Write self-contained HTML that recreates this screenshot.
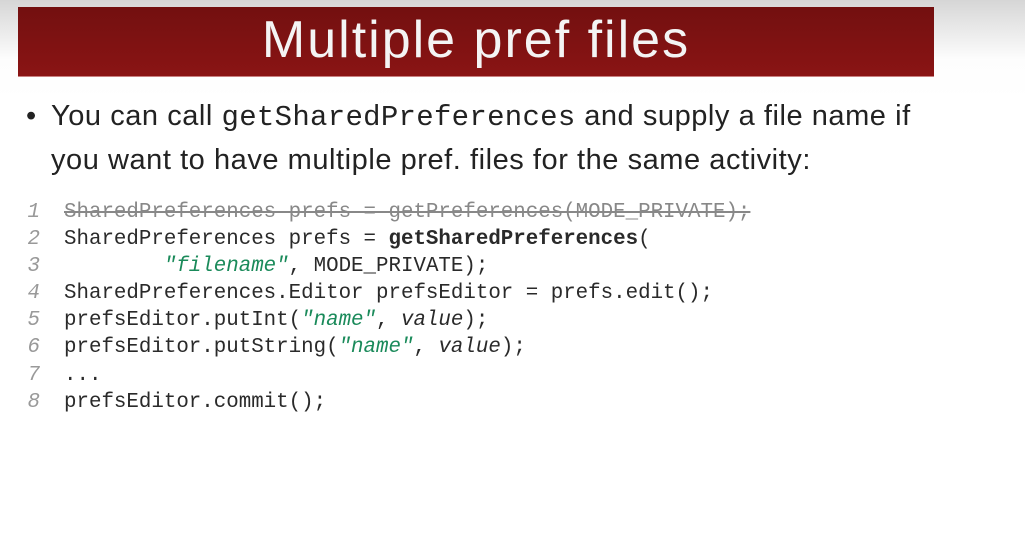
<!DOCTYPE html>
<html><head><style>
body{margin:0;width:1025px;height:538px;overflow:hidden;background:linear-gradient(#d6d6d6 0px,#fdfdfd 60px,#fff 100px);font-family:"Liberation Sans",sans-serif;position:relative}
.hdr{position:absolute;left:18px;top:7px;width:916px;height:69px;background:linear-gradient(#731010,#8a1414);border-bottom:1px solid #c98080}
.hdr div{position:absolute;left:0;right:0;top:3px;text-align:center;color:#f4f4f4;font-size:52px;letter-spacing:2px}
.b{position:absolute;left:26px;top:95px;font-size:29px;color:#222;line-height:42px;width:980px;letter-spacing:0.55px}
.b .dot{position:absolute;left:0;top:0}
.b .t{margin-left:25px}
.b code{font-family:"Liberation Mono",monospace;font-size:29px;letter-spacing:0.3px}
.code{position:absolute;left:0;top:199px;font-family:"Liberation Mono",monospace;font-size:20.8px;color:#2a2a2a;line-height:27.1px;white-space:pre}
.ln{display:inline-block;width:40px;text-align:right;color:#999;font-style:italic;margin-right:24px}
.s{color:#1a8a5a;font-style:italic}
.v{font-style:italic}
.del{text-decoration:line-through;color:#888}
</style></head><body>
<div class="hdr"><div>Multiple pref files</div></div>
<div class="b"><span class="dot">•</span><div class="t">You can call <code>getSharedPreferences</code> and supply a file name if<br>you want to have multiple pref. files for the same activity:</div></div>
<div class="code"><span class="ln">1</span><span class="del">SharedPreferences prefs = getPreferences(MODE_PRIVATE);</span>
<span class="ln">2</span>SharedPreferences prefs = <b>getSharedPreferences</b>(
<span class="ln">3</span>        <span class="s">"filename"</span>, MODE_PRIVATE);
<span class="ln">4</span>SharedPreferences.Editor prefsEditor = prefs.edit();
<span class="ln">5</span>prefsEditor.putInt(<span class="s">"name"</span>, <span class="v">value</span>);
<span class="ln">6</span>prefsEditor.putString(<span class="s">"name"</span>, <span class="v">value</span>);
<span class="ln">7</span>...
<span class="ln">8</span>prefsEditor.commit();</div>
</body></html>
